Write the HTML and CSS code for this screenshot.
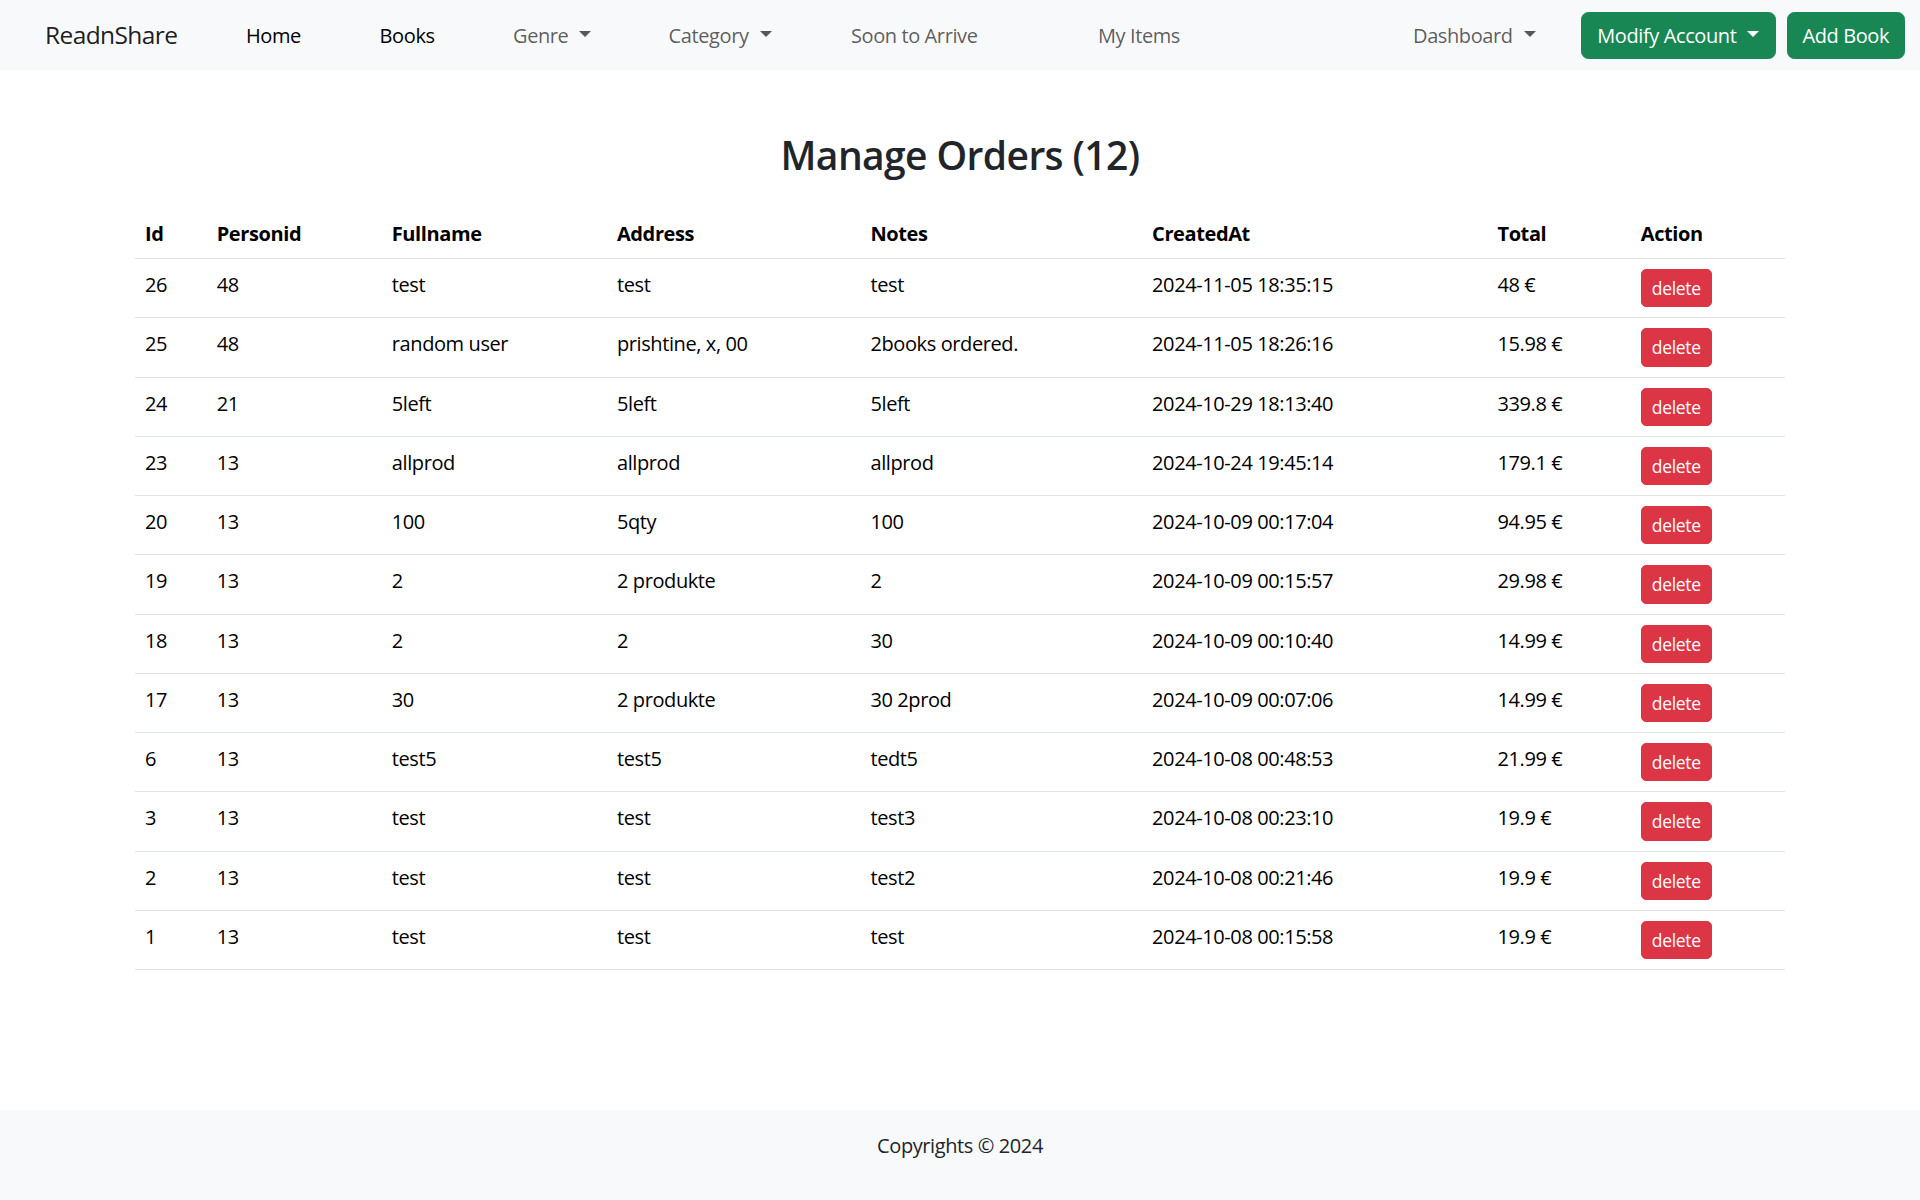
FILE: index.html
```html
<!DOCTYPE html>
<html lang="en">
<head>
<meta charset="utf-8">
<title>Manage Orders</title>
<link rel="stylesheet" href="styles.css">
</head>
<body>
<nav class="navbar">
  <a class="brand" href="#">ReadnShare</a>
  <ul class="nav-list">
    <li class="nav-item w-home"><a class="nav-link active" href="#">Home</a></li>
    <li class="nav-item w-books"><a class="nav-link active" href="#">Books</a></li>
    <li class="nav-item w-genre"><a class="nav-link dropdown-toggle" href="#">Genre</a></li>
    <li class="nav-item w-category"><a class="nav-link dropdown-toggle" href="#">Category</a></li>
    <li class="nav-item w-soon"><a class="nav-link" href="#">Soon to Arrive</a></li>
    <li class="nav-item"><a class="nav-link" href="#">My Items</a></li>
  </ul>
  <div class="nav-right">
    <a class="nav-link dropdown-toggle w-dash" href="#">Dashboard</a>
    <button class="btn btn-success w-modify dropdown-toggle" type="button">Modify Account</button>
    <button class="btn btn-success w-add" type="button">Add Book</button>
  </div>
</nav>

<main class="main">
  <div class="container">
    <h2 class="page-title">Manage Orders (12)</h2>
    <table class="table">
      <colgroup>
        <col class="c-id"><col class="c-person"><col class="c-name"><col class="c-address">
        <col class="c-notes"><col class="c-created"><col class="c-total"><col class="c-action">
      </colgroup>
      <thead>
        <tr><th>Id</th><th>Personid</th><th>Fullname</th><th>Address</th><th>Notes</th><th>CreatedAt</th><th>Total</th><th>Action</th></tr>
      </thead>
      <tbody>
        <tr><td>26</td><td>48</td><td>test</td><td>test</td><td>test</td><td>2024-11-05 18:35:15</td><td>48 €</td><td><button class="btn-del" type="button">delete</button></td></tr>
        <tr><td>25</td><td>48</td><td>random user</td><td>prishtine, x, 00</td><td>2books ordered.</td><td>2024-11-05 18:26:16</td><td>15.98 €</td><td><button class="btn-del" type="button">delete</button></td></tr>
        <tr><td>24</td><td>21</td><td>5left</td><td>5left</td><td>5left</td><td>2024-10-29 18:13:40</td><td>339.8 €</td><td><button class="btn-del" type="button">delete</button></td></tr>
        <tr><td>23</td><td>13</td><td>allprod</td><td>allprod</td><td>allprod</td><td>2024-10-24 19:45:14</td><td>179.1 €</td><td><button class="btn-del" type="button">delete</button></td></tr>
        <tr><td>20</td><td>13</td><td>100</td><td>5qty</td><td>100</td><td>2024-10-09 00:17:04</td><td>94.95 €</td><td><button class="btn-del" type="button">delete</button></td></tr>
        <tr><td>19</td><td>13</td><td>2</td><td>2 produkte</td><td>2</td><td>2024-10-09 00:15:57</td><td>29.98 €</td><td><button class="btn-del" type="button">delete</button></td></tr>
        <tr><td>18</td><td>13</td><td>2</td><td>2</td><td>30</td><td>2024-10-09 00:10:40</td><td>14.99 €</td><td><button class="btn-del" type="button">delete</button></td></tr>
        <tr><td>17</td><td>13</td><td>30</td><td>2 produkte</td><td>30 2prod</td><td>2024-10-09 00:07:06</td><td>14.99 €</td><td><button class="btn-del" type="button">delete</button></td></tr>
        <tr><td>6</td><td>13</td><td>test5</td><td>test5</td><td>tedt5</td><td>2024-10-08 00:48:53</td><td>21.99 €</td><td><button class="btn-del" type="button">delete</button></td></tr>
        <tr><td>3</td><td>13</td><td>test</td><td>test</td><td>test3</td><td>2024-10-08 00:23:10</td><td>19.9 €</td><td><button class="btn-del" type="button">delete</button></td></tr>
        <tr><td>2</td><td>13</td><td>test</td><td>test</td><td>test2</td><td>2024-10-08 00:21:46</td><td>19.9 €</td><td><button class="btn-del" type="button">delete</button></td></tr>
        <tr><td>1</td><td>13</td><td>test</td><td>test</td><td>test</td><td>2024-10-08 00:15:58</td><td>19.9 €</td><td><button class="btn-del" type="button">delete</button></td></tr>
      </tbody>
    </table>
  </div>
</main>

<footer class="footer">Copyrights © 2024</footer>
</body>
</html>
```

FILE: styles.css
```css
* { box-sizing: border-box; }

html, body {
  margin: 0;
  padding: 0;
}

body {
  font-family: "Open Sans", "Noto Sans", "DejaVu Sans", sans-serif;
  font-size: 20px;
  line-height: 1.5;
  letter-spacing: -0.4px;
  color: #212529;
  background: #fff;
  display: flex;
  flex-direction: column;
  min-height: 100vh;
}

a { text-decoration: none; }

/* Navbar */
.navbar {
  height: 70px;
  background: #f8f9fa;
  display: flex;
  align-items: center;
  padding: 1px 15px 0 45px;
}

.brand {
  flex: none;
  width: 201px;
  font-size: 24.5px;
  letter-spacing: -0.6px;
  color: rgba(0, 0, 0, 0.9);
  white-space: nowrap;
}

.nav-list {
  list-style: none;
  margin: 0;
  padding: 0;
  display: flex;
  align-items: center;
}

.nav-item { flex: none; }
.w-home { width: 133.6px; }
.w-books { width: 133.4px; }
.w-genre { width: 155.6px; }
.w-category { width: 182.4px; }
.w-soon { width: 247px; }

.nav-link {
  color: rgba(0, 0, 0, 0.65);
  white-space: nowrap;
}

.nav-link.active { color: #000; }

.dropdown-toggle::after {
  content: "";
  display: inline-block;
  margin-left: 0.55em;
  vertical-align: 0.255em;
  border-top: 0.3em solid;
  border-right: 0.3em solid transparent;
  border-left: 0.3em solid transparent;
  border-bottom: 0;
}

.nav-right {
  margin-left: auto;
  display: flex;
  align-items: center;
}

.w-dash {
  width: 168px;
  flex: none;
}

.btn {
  font-family: inherit;
  font-size: 20px;
  letter-spacing: -0.4px;
  line-height: 30px;
  height: 47.5px;
  padding: 7.5px 0;
  border: 1px solid transparent;
  border-radius: 7.5px;
  text-align: center;
  white-space: nowrap;
  cursor: pointer;
}

.btn-success {
  background: #198754;
  border-color: #198754;
  color: #fff;
}

.w-modify { width: 194.7px; margin-right: 10.8px; }
.w-add { width: 118.5px; }

/* Main */
.main { flex: 1 0 auto; }

.container {
  width: 1650px;
  margin: 0 auto;
}

.page-title {
  margin: 60.5px 0 29.5px;
  font-size: 39px;
  line-height: 48px;
  font-weight: 600;
  letter-spacing: -0.6px;
  text-align: center;
  color: #212529;
}

.table {
  width: 100%;
  table-layout: fixed;
  border-collapse: collapse;
  color: #000;
  vertical-align: top;
}

.c-id { width: 71.7px; }
.c-person { width: 175.1px; }
.c-name { width: 225.2px; }
.c-address { width: 253.5px; }
.c-notes { width: 281.6px; }
.c-created { width: 345.4px; }
.c-total { width: 143.3px; }
.c-action { width: 154.2px; }

.table th,
.table td {
  padding: 11px 10px 9px;
  text-align: left;
  vertical-align: top;
  border-bottom: 1px solid #dee2e6;
  white-space: nowrap;
}

.table th { font-weight: 700; }

.btn-del {
  display: inline-block;
  margin: -1px 0 1px;
  font-family: inherit;
  font-size: 17.5px;
  letter-spacing: -0.3px;
  line-height: 26.25px;
  height: 38.25px;
  padding: 5px 10px;
  border: 1px solid #dc3545;
  border-radius: 5px;
  background: #dc3545;
  color: #fff;
  cursor: pointer;
  vertical-align: top;
}

/* Footer */
.footer {
  flex: none;
  background: #f8f9fa;
  text-align: center;
  padding: 21px 0 39px;
  line-height: 30px;
  color: #212529;
}
```
